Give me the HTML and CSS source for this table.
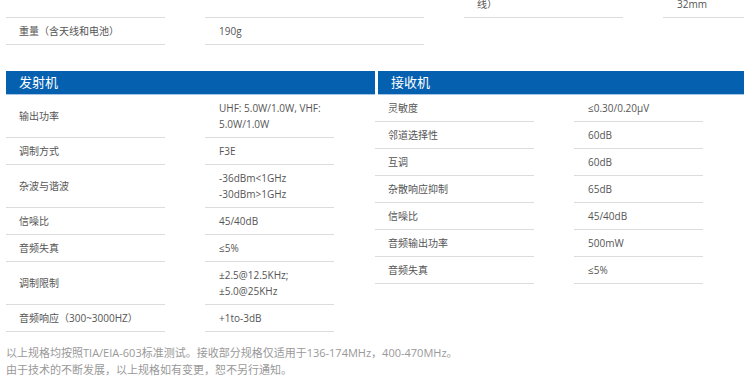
FILE: index.html
```html
<!DOCTYPE html>
<html lang="zh-CN">
<head>
<meta charset="utf-8">
<title>规格参数</title>
<link rel="stylesheet" href="styles.css">
</head>
<body>
<div class="page">
  <div class="spec-top">
    <div class="cell label lift"><span>电池容量</span></div>
    <div class="cell value lift"><span>1500mAh</span></div>
    <div class="cell label"><span>尺寸（高×宽×深，不含电池及天线）</span></div>
    <div class="cell value"><span>110×58×<br>32mm</span></div>
    <div class="cell label"><span>重量（含天线和电池）</span></div>
    <div class="cell value"><span>190g</span></div>
    <div class="cell empty"></div>
    <div class="cell empty"></div>
  </div>

  <div class="groups">
    <section class="group">
      <h2 class="group-title">发射机</h2>
      <div class="rows">
        <div class="cell label"><span>输出功率</span></div>
        <div class="cell value"><span>UHF: 5.0W/1.0W, VHF: 5.0W/1.0W</span></div>
        <div class="cell label"><span>调制方式</span></div>
        <div class="cell value"><span>F3E</span></div>
        <div class="cell label"><span>杂波与谐波</span></div>
        <div class="cell value"><span>-36dBm&lt;1GHz -30dBm&gt;1GHz</span></div>
        <div class="cell label"><span>信噪比</span></div>
        <div class="cell value"><span>45/40dB</span></div>
        <div class="cell label"><span>音频失真</span></div>
        <div class="cell value"><span>≤5%</span></div>
        <div class="cell label"><span>调制限制</span></div>
        <div class="cell value"><span>±2.5@12.5KHz; ±5.0@25KHz</span></div>
        <div class="cell label"><span>音频响应（300~3000HZ）</span></div>
        <div class="cell value"><span>+1to-3dB</span></div>
      </div>
    </section>

    <section class="group group-rx">
      <h2 class="group-title">接收机</h2>
      <div class="rows">
        <div class="cell label"><span>灵敏度</span></div>
        <div class="cell value"><span>≤0.30/0.20µV</span></div>
        <div class="cell label"><span>邻道选择性</span></div>
        <div class="cell value"><span>60dB</span></div>
        <div class="cell label"><span>互调</span></div>
        <div class="cell value"><span>60dB</span></div>
        <div class="cell label"><span>杂散响应抑制</span></div>
        <div class="cell value"><span>65dB</span></div>
        <div class="cell label"><span>信噪比</span></div>
        <div class="cell value"><span>45/40dB</span></div>
        <div class="cell label"><span>音频输出功率</span></div>
        <div class="cell value"><span>500mW</span></div>
        <div class="cell label"><span>音频失真</span></div>
        <div class="cell value"><span>≤5%</span></div>
      </div>
    </section>
  </div>

  <p class="note">以上规格均按照TIA/EIA-603标准测试。接收部分规格仅适用于136-174MHz，400-470MHz。<br>由于技术的不断发展，以上规格如有变更，恕不另行通知。</p>
</div>
</body>
</html>
```

FILE: styles.css
```css
* {
  box-sizing: border-box;
  margin: 0;
  padding: 0;
}

body {
  background: #fff;
  color: #555;
  font-family: "Open Sans", "Noto Sans CJK SC", sans-serif;
  font-size: 10px;
}

.page {
  margin-top: -25px;
  padding-left: 6px;
}

/* general specs: two label/value pairs side by side */
.spec-top {
  display: grid;
  grid-template-columns: 159px 219px 159px 81px;
  column-gap: 40px;
}

.cell {
  display: flex;
  align-items: center;
  min-height: 27px;
  padding: 5px 0;
  line-height: 16px;
  border-bottom: 1px solid #dcdcdc;
}

.cell.label {
  padding-left: 13px;
}

.cell.value {
  padding-left: 14px;
}

/* single-line cells sharing a row with two-line neighbours sit a touch higher */
.cell.lift {
  padding-bottom: 7px;
}

.cell.empty {
  border-bottom: 0;
}

/* transmitter / receiver blocks */
.groups {
  display: grid;
  grid-template-columns: 369px 369px;
  align-items: start;
  margin-top: 26px;
}

.group-title {
  height: 24px;
  padding-left: 13px;
  background: #0561b0;
  border-bottom: 1px solid #a6c4e6;
  color: #fff;
  font-size: 13px;
  font-weight: 400;
  line-height: 23px;
}

.group-rx .group-title {
  margin-left: 3px;
}

.rows {
  display: grid;
  grid-template-columns: 159px 129px;
  column-gap: 40px;
}

.note {
  margin-top: 13px;
  color: #999;
  font-size: 11px;
  line-height: 16.5px;
}
```
